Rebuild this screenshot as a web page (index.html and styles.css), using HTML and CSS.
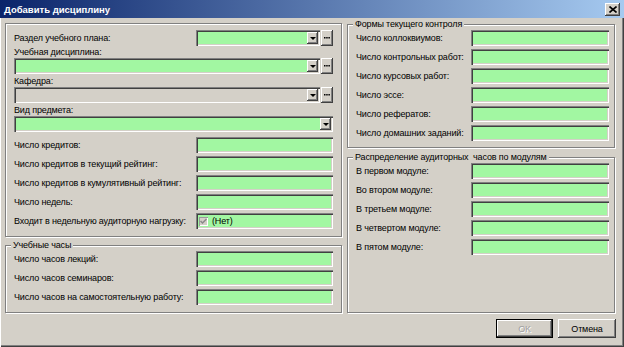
FILE: index.html
```html
<!DOCTYPE html>
<html lang="ru">
<head>
  <title>Добавить дисциплину</title>
  <meta charset="UTF-8">
  <link rel="stylesheet" href="styles.css">
</head>
<body>

  <div class="window">
    <div class="titlebar">
      <span class="title">Добавить дисциплину</span>
      <span class="close-btn">
        <svg width="8" height="7" viewBox="0 0 8 7"><path d="M0.5 0.5 L7.5 6.5 M7.5 0.5 L0.5 6.5" stroke="#000" stroke-width="1.6"/></svg>
      </span>
    </div>

    <div class="client">
      <div class="columns">

        <div class="column left-column">
          <div class="group group-main">
            <div class="row">
              <span class="label">Раздел учебного плана:</span>
              <div class="combo-wrap">
                <div class="field combo"><span class="drop-btn"></span></div>
                <span class="dots-btn"><svg width="6" height="2" viewBox="0 0 6 2"><rect x="0" y="0" width="1.5" height="1.5"/><rect x="2.2" y="0" width="1.5" height="1.5"/><rect x="4.4" y="0" width="1.5" height="1.5"/></svg></span>
              </div>
            </div>

            <div class="label-block">Учебная дисциплина:</div>
            <div class="combo-wrap">
              <div class="field combo"><span class="drop-btn"></span></div>
              <span class="dots-btn"><svg width="6" height="2" viewBox="0 0 6 2"><rect x="0" y="0" width="1.5" height="1.5"/><rect x="2.2" y="0" width="1.5" height="1.5"/><rect x="4.4" y="0" width="1.5" height="1.5"/></svg></span>
            </div>

            <div class="label-block spaced">Кафедра:</div>
            <div class="combo-wrap">
              <div class="field combo disabled"><span class="drop-btn"></span></div>
              <span class="dots-btn"><svg width="6" height="2" viewBox="0 0 6 2"><rect x="0" y="0" width="1.5" height="1.5"/><rect x="2.2" y="0" width="1.5" height="1.5"/><rect x="4.4" y="0" width="1.5" height="1.5"/></svg></span>
            </div>

            <div class="label-block spaced">Вид предмета:</div>
            <div class="field combo"><span class="drop-btn"></span></div>

            <div class="rows rows-credits">
              <div class="row"><span class="label">Число кредитов:</span><div class="field"></div></div>
              <div class="row"><span class="label">Число кредитов в текущий рейтинг:</span><div class="field"></div></div>
              <div class="row"><span class="label">Число кредитов в кумулятивный рейтинг:</span><div class="field"></div></div>
              <div class="row"><span class="label">Число недель:</span><div class="field"></div></div>
              <div class="row">
                <span class="label">Входит в недельную аудиторную нагрузку:</span>
                <div class="field check-field">
                  <span class="checkbox"><svg width="7" height="7" viewBox="0 0 7 7"><path d="M0.5 3 L2.5 5 L6.5 1" fill="none" stroke="#8a8a8a" stroke-width="1.5"/></svg></span>
                  <span>(Нет)</span>
                </div>
              </div>
            </div>
          </div>

          <div class="group group-hours">
            <div class="group-title">Учебные часы</div>
            <div class="rows">
              <div class="row"><span class="label">Число часов лекций:</span><div class="field"></div></div>
              <div class="row"><span class="label">Число часов семинаров:</span><div class="field"></div></div>
              <div class="row"><span class="label">Число часов на самостоятельную работу:</span><div class="field"></div></div>
            </div>
          </div>
        </div>

        <div class="column right-column">
          <div class="group group-control">
            <div class="group-title">Формы текущего контроля</div>
            <div class="rows">
              <div class="row"><span class="label">Число коллоквиумов:</span><div class="field"></div></div>
              <div class="row"><span class="label">Число контрольных работ:</span><div class="field"></div></div>
              <div class="row"><span class="label">Число курсовых работ:</span><div class="field"></div></div>
              <div class="row"><span class="label">Число эссе:</span><div class="field"></div></div>
              <div class="row"><span class="label">Число рефератов:</span><div class="field"></div></div>
              <div class="row"><span class="label">Число домашних заданий:</span><div class="field"></div></div>
            </div>
          </div>

          <div class="group group-modules">
            <div class="group-title">Распределение аудиторных&nbsp; часов по модулям</div>
            <div class="rows">
              <div class="row"><span class="label">В первом модуле:</span><div class="field"></div></div>
              <div class="row"><span class="label">Во втором модуле:</span><div class="field"></div></div>
              <div class="row"><span class="label">В третьем модуле:</span><div class="field"></div></div>
              <div class="row"><span class="label">В четвертом модуле:</span><div class="field"></div></div>
              <div class="row"><span class="label">В пятом модуле:</span><div class="field"></div></div>
            </div>
          </div>
        </div>

      </div>

      <div class="buttons">
        <span class="btn btn-default">OK</span>
        <span class="btn btn-cancel">Отмена</span>
      </div>
    </div>
  </div>

</body>
</html>
```

FILE: styles.css
```css
* {
  box-sizing: border-box;
}

body {
  margin: 0;
  font-family: "Liberation Sans", Arial, sans-serif;
  font-size: 9px;
  letter-spacing: -0.15px;
  color: #000;
  background-color: #d4d0c8;
}

/* window frame */
.window {
  width: 624px;
  height: 347px;
  display: flex;
  flex-direction: column;
  background-color: #d4d0c8;
  box-shadow: inset 1px 0 #fff, inset -1px -1px #404040, inset -2px -2px #808080;
}

.titlebar {
  height: 18px;
  display: flex;
  align-items: center;
  justify-content: space-between;
  padding: 0 4px;
  background: linear-gradient(to right, #0a246a, #a6caf0);
}

.title {
  color: #fff;
  font-weight: bold;
  font-size: 9.5px;
  letter-spacing: 0;
}

.close-btn {
  width: 15px;
  height: 13px;
  display: flex;
  align-items: center;
  justify-content: center;
  background-color: #d4d0c8;
  box-shadow: inset -1px -1px #404040, inset 1px 1px #fff, inset -2px -2px #808080;
}

.client {
  flex: 1;
  display: flex;
  flex-direction: column;
  padding: 0 9px 0 5px;
}

.columns {
  display: flex;
  gap: 5px;
  height: 295px;
}

.column {
  display: flex;
  flex-direction: column;
}

.left-column {
  width: 337px;
}

.right-column {
  width: 268px;
}

/* etched group boxes */
.group {
  border: 1px solid #808080;
  box-shadow: inset 1px 1px #fff, 1px 1px #fff;
}

.group-title {
  width: fit-content;
  height: 12px;
  line-height: 12px;
  margin: -7px 0 0 -3px;
  padding: 0 2px;
  background-color: #d4d0c8;
}

.group-main {
  margin-top: 5px;
  padding: 6px 8px 7px;
}

.group-hours {
  flex: 1;
  margin-top: 8px;
  padding: 0 8px;
}

.group-control {
  margin-top: 6px;
  padding: 0 5px 6px 8px;
}

.group-modules {
  flex: 1;
  margin-top: 9px;
  padding: 0 5px 0 8px;
}

.rows {
  display: flex;
  flex-direction: column;
  gap: 3px;
}

.rows-credits {
  margin-top: 5px;
}

.row {
  height: 16px;
  display: grid;
  grid-template-columns: minmax(0, 1fr) 137px;
  align-items: center;
}

.right-column .row {
  grid-template-columns: minmax(0, 1fr) 138px;
}

.label {
  white-space: nowrap;
}

.label-block {
  height: 12px;
  line-height: 12px;
}

.label-block.spaced {
  margin-top: 1px;
}

/* sunken edit fields */
.field {
  height: 16px;
  background-color: #a2f7a2;
  box-shadow: inset 1px 1px #808080, inset 2px 2px #404040, inset -1px -1px #fff, inset -2px -2px #d4d0c8;
}

.field.disabled {
  background-color: #d4d0c8;
}

.combo {
  display: flex;
  justify-content: flex-end;
  padding: 2px;
}

.combo-wrap {
  display: flex;
  gap: 1px;
}

.combo-wrap .combo {
  flex: 1;
}

.drop-btn {
  width: 11px;
  display: flex;
  align-items: center;
  justify-content: center;
  background-color: #d4d0c8;
  box-shadow: inset -1px -1px #404040, inset 1px 1px #fff, inset -2px -2px #808080;
}

.drop-btn::after {
  content: "";
  border-left: 3px solid transparent;
  border-right: 3px solid transparent;
  border-top: 3px solid #000;
  margin-top: 1px;
}

.dots-btn {
  width: 12px;
  height: 16px;
  display: flex;
  align-items: center;
  justify-content: center;
  background-color: #d4d0c8;
  box-shadow: inset -1px -1px #404040, inset 1px 1px #fff, inset -2px -2px #808080;
}

.check-field {
  display: flex;
  align-items: center;
  gap: 4px;
  padding-left: 3px;
}

.checkbox {
  width: 9px;
  height: 9px;
  display: flex;
  align-items: center;
  justify-content: center;
  background-color: #d4d0c8;
  box-shadow: inset 1px 1px #9a9a9a, inset -1px -1px #fff;
}

/* dialog buttons */
.buttons {
  display: flex;
  justify-content: flex-end;
  gap: 5px;
  margin: 6px -1px 0 0;
}

.btn {
  height: 19px;
  display: flex;
  align-items: center;
  justify-content: center;
  background-color: #d4d0c8;
  box-shadow: inset -1px -1px #404040, inset 1px 1px #fff, inset -2px -2px #808080;
}

.btn-default {
  width: 57px;
  border: 1px solid #000;
  color: #a0a0a0;
  text-shadow: 1px 1px #fff;
}

.btn-cancel {
  width: 58px;
}
```
